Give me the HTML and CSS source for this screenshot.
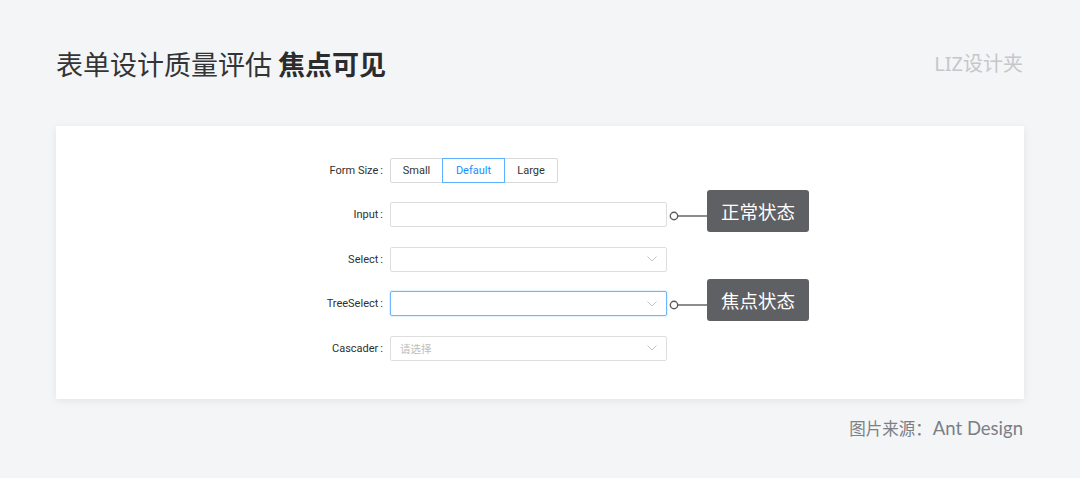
FILE: index.html
```html
<!DOCTYPE html>
<html lang="zh-CN">
<head>
<meta charset="utf-8">
<title>表单设计质量评估 焦点可见</title>
<link rel="stylesheet" href="styles.css">
</head>
<body>
<header class="header">
  <h1 class="title">表单设计质量评估 <strong>焦点可见</strong></h1>
  <div class="brand">LIZ设计夹</div>
</header>
<main class="card">
  <form class="form">
    <div class="row">
      <label class="label">Form Size<span class="colon">:</span></label>
      <div class="radio-group">
        <span class="radio">Small</span>
        <span class="radio active">Default</span>
        <span class="radio">Large</span>
      </div>
    </div>
    <div class="row">
      <label class="label">Input<span class="colon">:</span></label>
      <div class="control"></div>
      <div class="callout">
        <svg class="pin" width="38" height="10" viewBox="0 0 38 10"><circle cx="5" cy="5" r="3.7" fill="#fff" stroke="#5b5c60" stroke-width="1.4"/><line x1="8.7" y1="5" x2="38" y2="5" stroke="#5b5c60" stroke-width="1.4"/></svg>
        <span class="tag">正常状态</span>
      </div>
    </div>
    <div class="row">
      <label class="label">Select<span class="colon">:</span></label>
      <div class="control select">
        <svg class="arrow" width="10" height="6" viewBox="0 0 10 6"><polyline points="0.5,0.5 5,5 9.5,0.5" fill="none" stroke="#c4c4c4" stroke-width="1"/></svg>
      </div>
    </div>
    <div class="row">
      <label class="label">TreeSelect<span class="colon">:</span></label>
      <div class="control select focus">
        <svg class="arrow" width="10" height="6" viewBox="0 0 10 6"><polyline points="0.5,0.5 5,5 9.5,0.5" fill="none" stroke="#c4c4c4" stroke-width="1"/></svg>
      </div>
      <div class="callout">
        <svg class="pin" width="38" height="10" viewBox="0 0 38 10"><circle cx="5" cy="5" r="3.7" fill="#fff" stroke="#5b5c60" stroke-width="1.4"/><line x1="8.7" y1="5" x2="38" y2="5" stroke="#5b5c60" stroke-width="1.4"/></svg>
        <span class="tag">焦点状态</span>
      </div>
    </div>
    <div class="row">
      <label class="label">Cascader<span class="colon">:</span></label>
      <div class="control select">
        <span class="placeholder">请选择</span>
        <svg class="arrow" width="10" height="6" viewBox="0 0 10 6"><polyline points="0.5,0.5 5,5 9.5,0.5" fill="none" stroke="#c4c4c4" stroke-width="1"/></svg>
      </div>
    </div>
  </form>
</main>
<footer class="footer">图片来源<span class="fcolon">：</span><span class="latin">Ant Design</span></footer>
</body>
</html>
```

FILE: styles.css
```css
* { box-sizing: border-box; }
html, body { margin: 0; padding: 0; }
body {
  width: 1080px;
  height: 478px;
  background: #f4f5f7;
  font-family: "Noto Sans CJK SC", "Noto Sans", sans-serif;
  overflow: hidden;
}
.header {
  height: 126px;
  padding: 2px 57px 0 56px;
  display: flex;
  align-items: center;
  justify-content: space-between;
}
.title {
  margin: 0;
  font-size: 27px;
  line-height: 32px;
  font-weight: 400;
  color: #333436;
  letter-spacing: 0;
}
.title strong { font-weight: 700; color: #2b2c2e; }
.brand {
  font-family: "Noto Sans", "Noto Sans CJK SC", sans-serif;
  font-size: 20px;
  line-height: 24px;
  color: #c6c7c9;
}
.card {
  margin: 0 56px;
  height: 273px;
  background: #fff;
  box-shadow: 0 2px 8px rgba(0, 0, 0, 0.07);
  padding-top: 31.5px;
}
.form {
  display: flex;
  flex-direction: column;
  gap: 19.5px;
}
.row {
  height: 25px;
  display: flex;
  align-items: center;
}
.label {
  width: 328px;
  text-align: right;
  font-family: "Roboto", "Noto Sans CJK SC", sans-serif;
  font-size: 11px;
  color: #2f2f2f;
  padding-right: 1px;
}
.colon { margin-left: 2px; }
.radio-group {
  margin-left: 6px;
  display: flex;
  height: 25px;
}
.radio {
  height: 25px;
  display: flex;
  align-items: center;
  justify-content: center;
  border: 1px solid #d9d9d9;
  margin-left: -1px;
  font-family: "Roboto", sans-serif;
  font-size: 11px;
  color: #333;
  background: #fff;
}
.radio:nth-child(1) { width: 53px; margin-left: 0; border-radius: 2px 0 0 2px; }
.radio:nth-child(2) { width: 63px; }
.radio:nth-child(3) { width: 54px; border-radius: 0 2px 2px 0; }
.radio.active {
  border-color: #5fb0ff;
  color: #1890ff;
  position: relative;
  z-index: 1;
}
.control {
  margin-left: 6px;
  width: 277px;
  height: 25px;
  border: 1px solid #dedede;
  border-radius: 2px;
  background: #fff;
  display: flex;
  align-items: center;
  padding: 0 9px 0 9px;
}
.control.focus {
  border-color: #6cb6ff;
  box-shadow: 0 0 0 1px rgba(24, 144, 255, 0.12);
}
.placeholder {
  font-size: 10.5px;
  color: #bdbdbd;
}
.arrow { margin-left: auto; }
.callout {
  display: flex;
  align-items: center;
  margin-left: 2px;
}
.pin { display: block; margin-top: 2px; }
.tag {
  width: 102px;
  height: 42px;
  margin-bottom: 8px;
  background: #5f6064;
  border-radius: 3px;
  color: #fff;
  font-size: 18.5px;
  display: flex;
  align-items: center;
  justify-content: center;
}
.footer {
  margin-top: 17px;
  padding-right: 57px;
  text-align: right;
  font-size: 16.5px;
  line-height: 24px;
  color: #7b7f88;
}
.fcolon { margin-right: 1px; }
.latin { font-family: "Lato", "Noto Sans", sans-serif; font-size: 18.5px; }
```
